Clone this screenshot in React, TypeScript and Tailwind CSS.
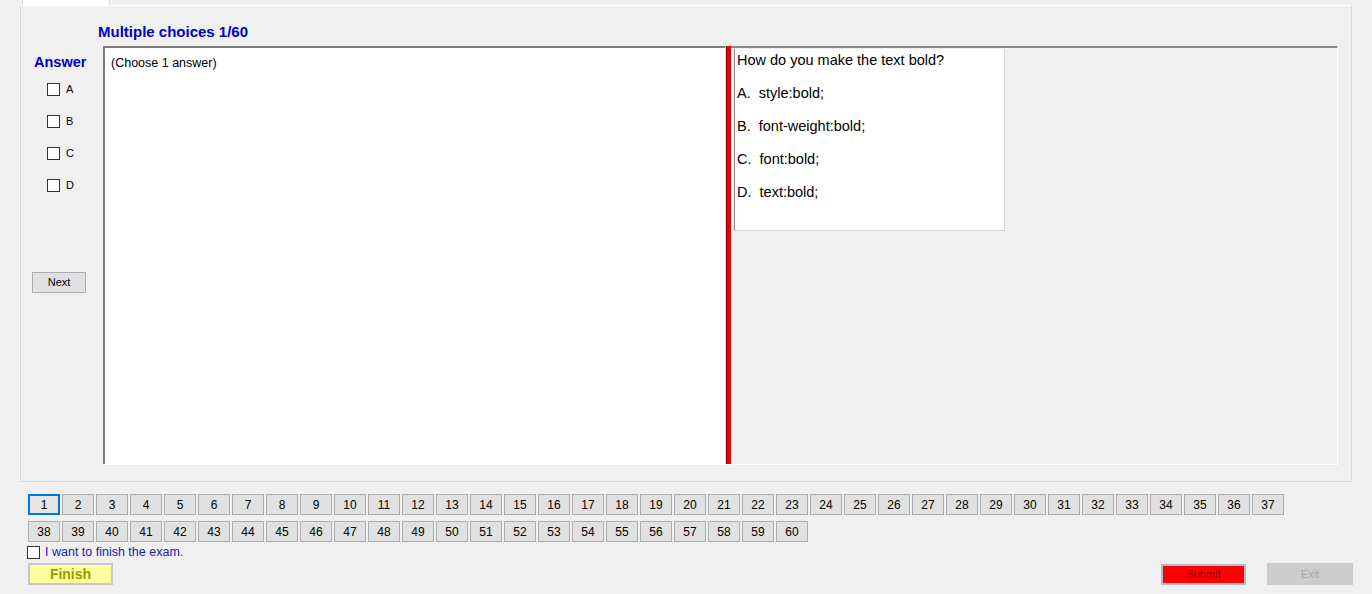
import React from "react"

const answers = ["A", "B", "C", "D"]
const options = ["A.  style:bold;", "B.  font-weight:bold;", "C.  font:bold;", "D.  text:bold;"]
const row1 = Array.from({ length: 37 }, (_, i) => i + 1)
const row2 = Array.from({ length: 23 }, (_, i) => i + 38)

function Box() {
  return <span className="block w-[13px] h-[13px] border border-[#333] bg-white shrink-0" />
}

function NumButton({ n }: { n: number }) {
  const active = n === 1
  return (
    <div
      className={
        active
          ? "w-[32px] h-[21px] mr-[2px] shrink-0 flex items-center justify-center border-2 border-[#0078d7] bg-[#e5e5e5] text-[12px] text-black"
          : "w-[32px] h-[21px] mr-[2px] shrink-0 flex items-center justify-center border border-[#adadad] bg-[#e1e1e1] text-[12px] text-black"
      }
    >
      {n}
    </div>
  )
}

export default function App() {
  return (
    <div className="w-[1372px] h-[594px] bg-[#f0f0f0] overflow-hidden font-['Liberation_Sans',Arial,sans-serif] text-black">
      {/* tab strip */}
      <div className="h-[5px] flex">
        <div className="ml-[22px] w-[88px] h-[5px] bg-white border-x border-[#d9d9d9]" />
      </div>

      {/* tab page */}
      <div className="ml-[20px] w-[1332px] h-[477px] border border-[#d9d9d9] border-t-white">
        <div className="pl-[77px] pt-[18px] h-[40px] text-[15px] leading-[16px] font-bold text-[#0000c8]">
          Multiple choices 1/60
        </div>

        <div className="flex">
          {/* answer column */}
          <div className="w-[82px] shrink-0">
            <div className="pl-[13px] pt-[7px] text-[14.5px] leading-[18px] font-bold text-[#0000c8]">Answer</div>
            <div className="pl-[26px] mt-[12px] flex flex-col gap-[19px]">
              {answers.map((a) => (
                <div key={a} className="flex items-center gap-[6px] h-[13px]">
                  <Box />
                  <span className="text-[11px] leading-[13px]">{a}</span>
                </div>
              ))}
            </div>
            <div className="ml-[11px] mt-[80px] w-[54px] h-[21px] flex items-center justify-center border border-[#adadad] bg-[#e1e1e1] text-[11px]">
              Next
            </div>
          </div>

          {/* split container */}
          <div className="w-[1235px] h-[419px] flex border-b border-white">
            <div className="w-[623px] h-full bg-white border-t-2 border-l-2 border-[#7a7a7a] border-r border-r-[#e3e3e3] pl-[6px] pt-[7px] text-[12.5px] leading-[16px]">
              (Choose 1 answer)
            </div>
            <div className="w-[5px] h-full bg-[#e60000] border-l border-[#900000]" />
            <div className="flex-1 h-full border-t-2 border-[#8a8a8a] border-r border-r-white">
              <div className="ml-[3px] mt-[1px] w-[271px] h-[182px] bg-white border-l border-l-[#8a8a8a] border-r border-b border-[#d4d4d4] pl-[2px] pt-[1px] text-[14.5px]">
                <div className="h-[20px] leading-[20px]">How do you make the text bold?</div>
                <div className="mt-[7px]">
                  {options.map((o) => (
                    <div key={o} className="leading-[33px] whitespace-pre">
                      {o}
                    </div>
                  ))}
                </div>
              </div>
            </div>
          </div>
        </div>
      </div>

      {/* question numbers */}
      <div className="pl-[28px] pr-[19px]">
        <div className="flex mt-[12px]">
          {row1.map((n) => (
            <NumButton key={n} n={n} />
          ))}
        </div>
        <div className="flex mt-[6px]">
          {row2.map((n) => (
            <NumButton key={n} n={n} />
          ))}
        </div>
        <div className="flex items-center gap-[5px] mt-[3px] ml-[-1px] h-[15px]">
          <Box />
          <span className="text-[12.5px] leading-[15px] text-[#1a1ab4]">I want to finish the exam.</span>
        </div>
        <div className="flex items-center justify-between mt-[3px]">
          <div className="w-[85px] h-[22px] flex items-center justify-center border-2 border-[#c8c8c8] bg-[#ffffa0] text-[14px] font-bold text-[#9a9a00]">
            Finish
          </div>
          <div className="flex items-center gap-[21px]">
            <div className="w-[85px] h-[21px] flex items-center justify-center border-2 border-[#b4bcc8] bg-[#ff0000] text-[11px] text-[#8a0000]">
              Submit
            </div>
            <div className="w-[86px] h-[22px] flex items-center justify-center bg-[#cccccc] text-[11px] text-[#a8a8a8]">
              Exit
            </div>
          </div>
        </div>
      </div>
    </div>
  )
}
